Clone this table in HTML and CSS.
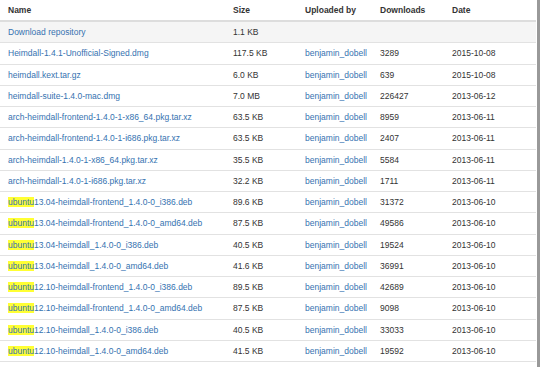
FILE: index.html
```html
<!DOCTYPE html>
<html lang="en">
<head>
    <meta charset="UTF-8">
    <title>Downloads</title>
    <link rel="stylesheet" href="styles.css">
</head>
<body>
    <div class="page">
        <table class="downloads">
            <colgroup>
                <col class="col-name">
                <col class="col-size">
                <col class="col-user">
                <col class="col-count">
                <col class="col-date">
            </colgroup>
            <thead>
                <tr>
                    <th>Name</th>
                    <th>Size</th>
                    <th>Uploaded by</th>
                    <th>Downloads</th>
                    <th>Date</th>
                </tr>
            </thead>
            <tbody>
                <tr class="repo">
                    <td><a href="#">Download repository</a></td>
                    <td>1.1 KB</td>
                    <td></td>
                    <td></td>
                    <td></td>
                </tr>
                <tr>
                    <td><a href="#">Heimdall-1.4.1-Unofficial-Signed.dmg</a></td>
                    <td>117.5 KB</td>
                    <td><a href="#">benjamin_dobell</a></td>
                    <td>3289</td>
                    <td>2015-10-08</td>
                </tr>
                <tr>
                    <td><a href="#">heimdall.kext.tar.gz</a></td>
                    <td>6.0 KB</td>
                    <td><a href="#">benjamin_dobell</a></td>
                    <td>639</td>
                    <td>2015-10-08</td>
                </tr>
                <tr>
                    <td><a href="#">heimdall-suite-1.4.0-mac.dmg</a></td>
                    <td>7.0 MB</td>
                    <td><a href="#">benjamin_dobell</a></td>
                    <td>226427</td>
                    <td>2013-06-12</td>
                </tr>
                <tr>
                    <td><a href="#">arch-heimdall-frontend-1.4.0-1-x86_64.pkg.tar.xz</a></td>
                    <td>63.5 KB</td>
                    <td><a href="#">benjamin_dobell</a></td>
                    <td>8959</td>
                    <td>2013-06-11</td>
                </tr>
                <tr>
                    <td><a href="#">arch-heimdall-frontend-1.4.0-1-i686.pkg.tar.xz</a></td>
                    <td>63.5 KB</td>
                    <td><a href="#">benjamin_dobell</a></td>
                    <td>2407</td>
                    <td>2013-06-11</td>
                </tr>
                <tr>
                    <td><a href="#">arch-heimdall-1.4.0-1-x86_64.pkg.tar.xz</a></td>
                    <td>35.5 KB</td>
                    <td><a href="#">benjamin_dobell</a></td>
                    <td>5584</td>
                    <td>2013-06-11</td>
                </tr>
                <tr>
                    <td><a href="#">arch-heimdall-1.4.0-1-i686.pkg.tar.xz</a></td>
                    <td>32.2 KB</td>
                    <td><a href="#">benjamin_dobell</a></td>
                    <td>1711</td>
                    <td>2013-06-11</td>
                </tr>
                <tr>
                    <td><a href="#"><mark>ubuntu</mark>13.04-heimdall-frontend_1.4.0-0_i386.deb</a></td>
                    <td>89.6 KB</td>
                    <td><a href="#">benjamin_dobell</a></td>
                    <td>31372</td>
                    <td>2013-06-10</td>
                </tr>
                <tr>
                    <td><a href="#"><mark>ubuntu</mark>13.04-heimdall-frontend_1.4.0-0_amd64.deb</a></td>
                    <td>87.5 KB</td>
                    <td><a href="#">benjamin_dobell</a></td>
                    <td>49586</td>
                    <td>2013-06-10</td>
                </tr>
                <tr>
                    <td><a href="#"><mark>ubuntu</mark>13.04-heimdall_1.4.0-0_i386.deb</a></td>
                    <td>40.5 KB</td>
                    <td><a href="#">benjamin_dobell</a></td>
                    <td>19524</td>
                    <td>2013-06-10</td>
                </tr>
                <tr>
                    <td><a href="#"><mark>ubuntu</mark>13.04-heimdall_1.4.0-0_amd64.deb</a></td>
                    <td>41.6 KB</td>
                    <td><a href="#">benjamin_dobell</a></td>
                    <td>36991</td>
                    <td>2013-06-10</td>
                </tr>
                <tr>
                    <td><a href="#"><mark>ubuntu</mark>12.10-heimdall-frontend_1.4.0-0_i386.deb</a></td>
                    <td>89.5 KB</td>
                    <td><a href="#">benjamin_dobell</a></td>
                    <td>42689</td>
                    <td>2013-06-10</td>
                </tr>
                <tr>
                    <td><a href="#"><mark>ubuntu</mark>12.10-heimdall-frontend_1.4.0-0_amd64.deb</a></td>
                    <td>87.5 KB</td>
                    <td><a href="#">benjamin_dobell</a></td>
                    <td>9098</td>
                    <td>2013-06-10</td>
                </tr>
                <tr>
                    <td><a href="#"><mark>ubuntu</mark>12.10-heimdall_1.4.0-0_i386.deb</a></td>
                    <td>40.5 KB</td>
                    <td><a href="#">benjamin_dobell</a></td>
                    <td>33033</td>
                    <td>2013-06-10</td>
                </tr>
                <tr>
                    <td><a href="#"><mark>ubuntu</mark>12.10-heimdall_1.4.0-0_amd64.deb</a></td>
                    <td>41.5 KB</td>
                    <td><a href="#">benjamin_dobell</a></td>
                    <td>19592</td>
                    <td>2013-06-10</td>
                </tr>
            </tbody>
        </table>
        <div class="scrollbar"></div>
    </div>
</body>
</html>
```

FILE: styles.css
```css
body {
    margin: 0;
    background: white;
    font-family: "Liberation Sans", Arial, sans-serif;
    font-size: 8.5px;
    color: #333;
    overflow: hidden;
}
.page {
    display: flex;
    height: 100vh;
}
.downloads {
    width: 536px;
    flex: none;
    align-self: flex-start;
    border-collapse: separate;
    border-spacing: 0;
    table-layout: fixed;
}
.col-name {
    width: 225px;
}
.col-size {
    width: 72px;
}
.col-user {
    width: 75px;
}
.col-count {
    width: 72px;
}
.col-date {
    width: 92px;
}
th {
    text-align: left;
    font-weight: bold;
    line-height: 12px;
    padding: 4px 0 4px 8px;
    border-bottom: 2px solid #ddd;
}
td {
    line-height: 12px;
    padding: 4.125px 0 4.125px 8px;
    border-bottom: 1px solid #e2e2e2;
    white-space: nowrap;
}
.repo td {
    background: #f5f5f5;
}
a {
    color: #3572b0;
    text-decoration: none;
}
mark {
    background: #ffff33;
    color: inherit;
}
.scrollbar {
    width: 3px;
    margin-left: 1px;
    background: #999;
}
```
